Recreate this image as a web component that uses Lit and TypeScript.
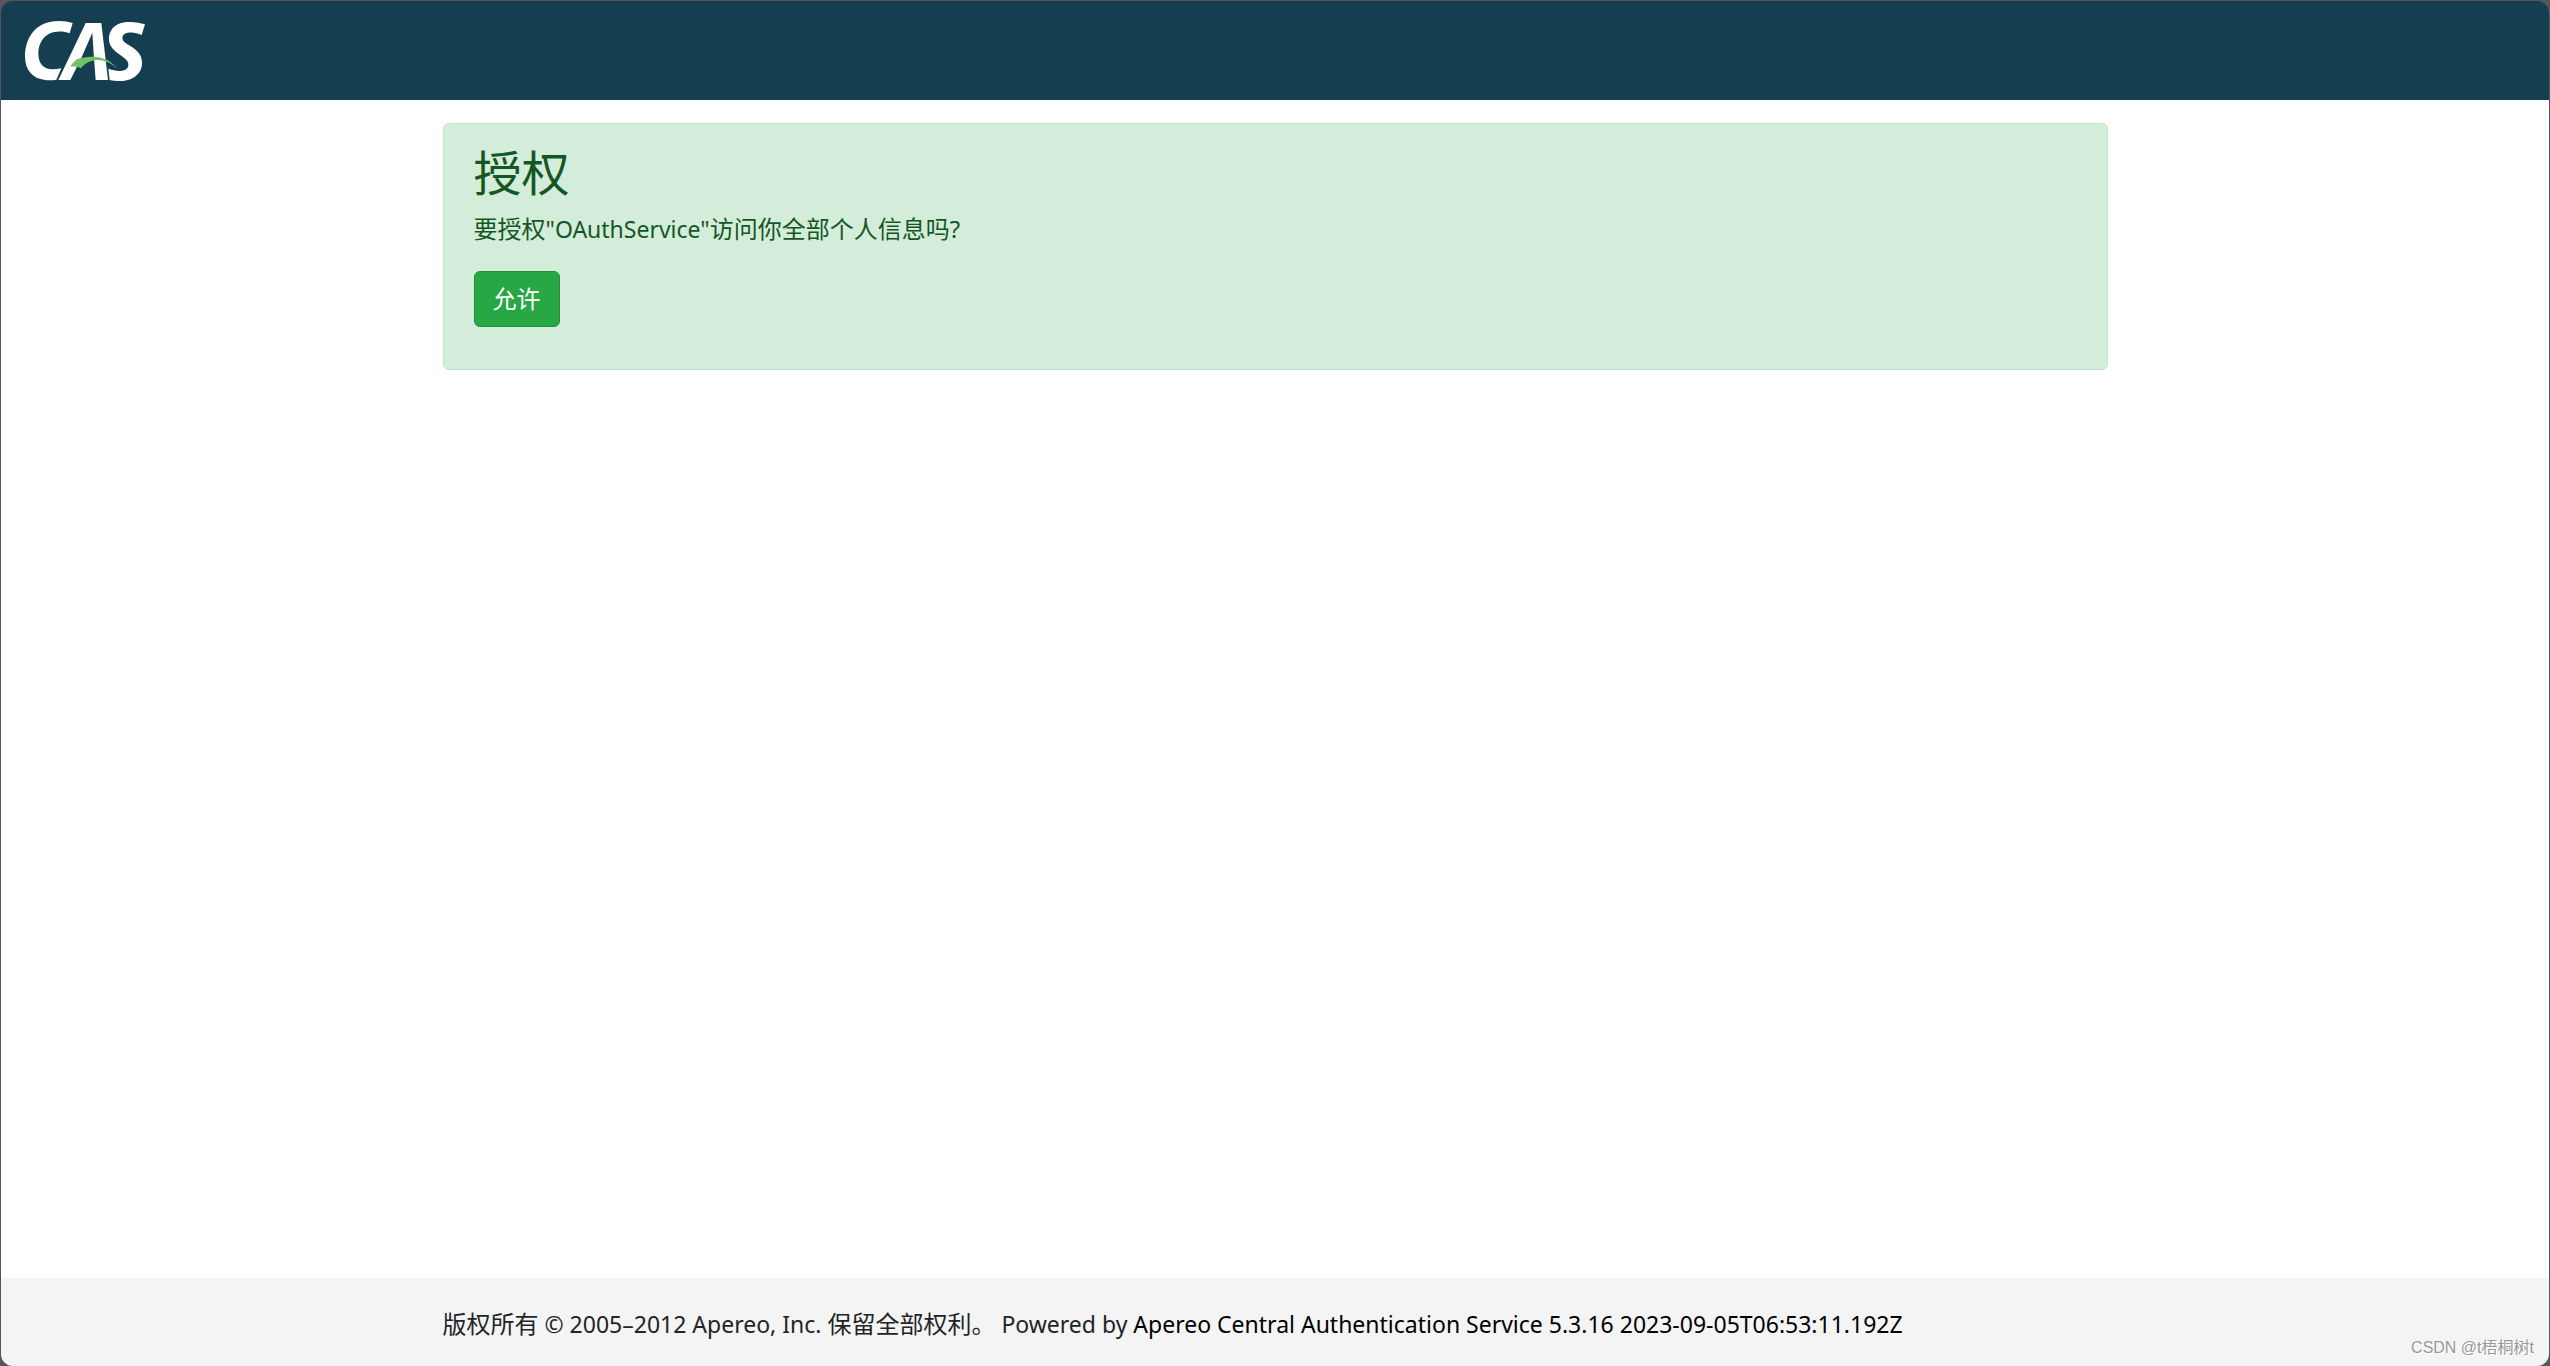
import { LitElement, html, css } from "lit";
import { customElement, property } from "lit/decorators.js";

@customElement("cas-logo")
class CasLogo extends LitElement {
  static styles = css`
    :host {
      display: block;
    }
    .mark {
      display: block;
      width: 122px;
      height: 62px;
    }
  `;

  render() {
    return html`
      <svg class="mark" viewBox="72 60 366 186" role="img" aria-label="CAS">
        <g fill="#fff">
          <path
            d="M218 69 L209 100 C194 94 178 93 163 96 C132 102 114 130 115 163 C116 192 132 208 156 208 C166 208 175 207 184 205 L169 239 C158 241 146 241 135 240 C98 236 75 211 75 169 C75 119 101 76 149 66 C174 61 199 63 218 69 Z"
          />
          <path
            d="M257 69 H304 L324 240 H287 L282 176 L277 98 L243 176 L211 240 H175 Z"
          />
          <path
            d="M435 73 L425 105 C411 98 397 96 384 98 C370 100 364 110 369 121 C377 137 423 145 426 184 C429 218 402 241 368 243 C354 244 341 242 329 240 L325 206 C340 211 354 214 366 212 C382 210 389 198 383 185 C374 168 329 154 327 121 C325 92 344 71 374 67 C395 64 417 67 435 73 Z"
          />
        </g>
        <path
          fill="#73c167"
          d="M211 199 C217 191 224 185 230 178 C250 171 271 169 290 171 C318 174 337 188 350 204 C335 191 318 182 298 180 C278 179 259 186 242 205 C238 202 234 200 230 200 C223 200 217 200 211 199 Z"
        />
      </svg>
    `;
  }
}

@customElement("app-root")
class AppRoot extends LitElement {
  @property() service = "OAuthService";

  static styles = css`
    :host {
      display: block;
      background: #55565b;
      color: #212529;
      font-family: "Noto Sans", "Noto Sans CJK SC", sans-serif;
      font-size: 24px;
      line-height: 36px;
    }
    .page {
      box-sizing: border-box;
      display: flex;
      flex-direction: column;
      min-height: 100vh;
      border: solid #55565b;
      border-width: 1px 1px 0;
      background: #55565b;
    }
    .header {
      display: flex;
      align-items: center;
      padding: 19px 23px 18px;
      border-radius: 12px 12px 0 0;
      background: #153e50;
    }
    .home {
      display: block;
    }
    .main {
      flex: 1;
      padding: 23px 24px;
      background: #fff;
    }
    .container {
      box-sizing: border-box;
      max-width: 1665px;
      margin: 0 auto;
    }
    .alert {
      box-sizing: border-box;
      padding: 20px 30px 18px;
      border: 1px solid #c3e6cb;
      border-radius: 6px;
      background: #d4edda;
      color: #155724;
    }
    .title {
      margin: 0 0 9px;
      font-size: 48px;
      font-weight: 400;
      line-height: 58px;
    }
    .question {
      margin: 0 0 24px;
    }
    .latin {
      font-size: 23px;
    }
    .actions {
      display: flex;
      margin: 0 0 24px;
    }
    .allow {
      padding: 9px 18px;
      border: 1px solid #23923d;
      border-radius: 6px;
      background: #28a745;
      color: #fff;
      font: inherit;
      cursor: pointer;
    }
    .footer {
      position: relative;
      padding: 28px 24px 24px;
      border-radius: 0 0 12px 12px;
      background: #f4f4f4;
    }
    .product {
      color: #000;
      text-decoration: none;
    }
    .credit {
      position: absolute;
      right: 15px;
      bottom: 6px;
      color: #999;
      font-family: "Liberation Sans", "Noto Sans CJK SC", sans-serif;
      font-size: 16px;
      line-height: 24px;
      text-shadow: 1px 1px 0 #fff;
    }
  `;

  render() {
    return html`
      <div class="page">
        <header class="header">
          <a class="home" href="#"><cas-logo></cas-logo></a>
        </header>
        <main class="main">
          <section class="container alert">
            <h2 class="title">授权</h2>
            <p class="question">
              要授权<span class="latin">"${this.service}"</span>访问你全部个人信息吗?
            </p>
            <div class="actions">
              <button class="allow" type="button">允许</button>
            </div>
          </section>
        </main>
        <footer class="footer">
          <div class="container">
            版权所有<span class="latin"> © 2005–2012 Apereo, Inc. </span>保留全部权利。<span
              class="latin"
            >
              Powered by
              <a class="product" href="#"
                >Apereo Central Authentication Service 5.3.16 2023-09-05T06:53:11.192Z</a
              ></span
            >
          </div>
          <span class="credit">CSDN @t梧桐树t</span>
        </footer>
      </div>
    `;
  }
}
